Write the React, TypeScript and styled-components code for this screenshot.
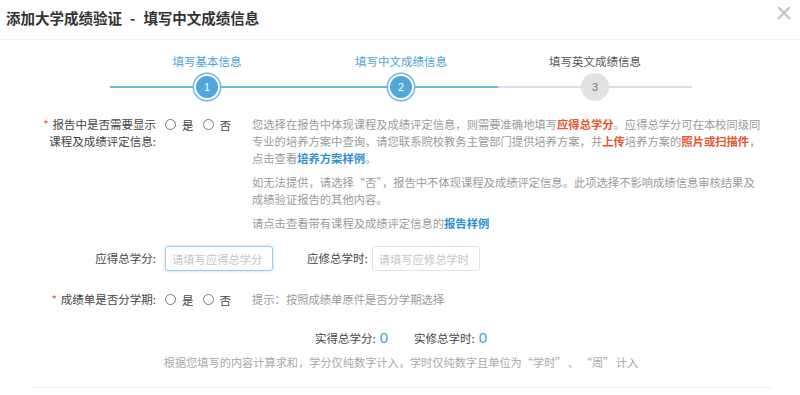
import styled, { createGlobalStyle } from 'styled-components'

const GlobalStyle = createGlobalStyle`
  html, body {
    margin: 0;
    padding: 0;
    background: #ffffff;
  }
  body {
    font-family: "Noto Sans CJK SC", "Noto Sans", sans-serif;
    color: #555;
  }
`

const Modal = styled.div`
  width: 800px;
  height: 395px;
  background: #fff;
  overflow: hidden;
`

const Header = styled.div`
  height: 40px;
  display: flex;
  align-items: center;
  justify-content: space-between;
  padding: 0 8px 0 6px;
  border-bottom: 1px solid #f1f1f1;
  box-sizing: border-box;
`

const Title = styled.h2`
  margin: -4px 0 0;
  font-size: 14.5px;
  font-weight: 700;
  color: #333;
`

const Dash = styled.span`
  margin: 0 8px;
`

const CloseButton = styled.button`
  border: 0;
  background: transparent;
  padding: 0;
  width: 16px;
  height: 16px;
  margin-top: -14px;
  cursor: pointer;
`

const Steps = styled.div`
  display: grid;
  grid-template-columns: repeat(3, 194px);
  padding-left: 110px;
  margin-top: 13px;
`

const Step = styled.div`
  display: flex;
  flex-direction: column;
  align-items: center;
`

const StepLabel = styled.div<{ $active: boolean }>`
  font-size: 11.5px;
  line-height: 16px;
  color: ${(p) => (p.$active ? '#4aa3d6' : '#555')};
`

const StepTrack = styled.div<{ $active: boolean }>`
  position: relative;
  width: 100%;
  height: 28px;
  margin-top: 4px;
  display: flex;
  align-items: center;
  justify-content: center;
  &::before {
    content: '';
    position: absolute;
    left: 0;
    right: 0;
    top: 13px;
    height: 2px;
    background: ${(p) => (p.$active ? '#6db7e1' : '#dcdcec')};
  }
`

const StepDot = styled.div<{ $active: boolean }>`
  position: relative;
  box-sizing: border-box;
  width: ${(p) => (p.$active ? '22px' : '28px')};
  height: ${(p) => (p.$active ? '22px' : '28px')};
  border-radius: 50%;
  background: ${(p) => (p.$active ? '#4ea8dc' : '#e2e2e2')};
  box-shadow: ${(p) => (p.$active ? '0 0 0 2px #fff, 0 0 0 3.5px #6db7e1' : 'none')};
  color: ${(p) => (p.$active ? '#fff' : '#777')};
  font-family: "Liberation Sans", Arial, sans-serif;
  font-size: 11px;
  display: flex;
  align-items: center;
  justify-content: center;
`

const Form = styled.div`
  margin-top: 15px;
`

const Row = styled.div<{ $align?: string; $gap?: number }>`
  display: flex;
  align-items: ${(p) => p.$align || 'flex-start'};
  margin-top: ${(p) => p.$gap ?? 0}px;
`

const Label = styled.div`
  width: 156px;
  flex-shrink: 0;
  text-align: right;
  font-size: 11.5px;
  line-height: 17px;
  color: #444;
`

const InlineLabel = styled.div`
  margin-left: 34px;
  font-size: 11.5px;
  line-height: 17px;
  color: #444;
`

const Required = styled.span`
  color: #e4572e;
  margin-right: 4px;
`

const RadioGroup = styled.div`
  width: 96px;
  flex-shrink: 0;
  display: flex;
  align-items: center;
  gap: 9px;
  padding-left: 9px;
  box-sizing: border-box;
  height: 17px;
`

const RadioOption = styled.label`
  display: flex;
  align-items: center;
  gap: 6px;
  font-size: 11.5px;
  color: #444;
`

const RadioCircle = styled.span`
  width: 9px;
  height: 9px;
  border: 1px solid #777;
  border-radius: 50%;
`

const Description = styled.div`
  width: 520px;
  font-size: 11.3px;
  line-height: 17px;
  color: #9a9a9a;
`

const Para = styled.p`
  margin: 0 0 7px;
  white-space: nowrap;
  &:last-child {
    margin-bottom: 0;
  }
`

const Warn = styled.b`
  color: #e4572e;
  font-weight: 700;
`

const LinkText = styled.b`
  color: #2b8fd3;
  font-weight: 700;
`

const Input = styled.input<{ $focused?: boolean }>`
  width: 108px;
  height: 25px;
  box-sizing: border-box;
  margin-left: ${(p) => (p.$focused ? 9 : 4)}px;
  padding: 0 6px;
  border: 1px solid ${(p) => (p.$focused ? '#9ccbea' : '#e2e2e2')};
  border-radius: 3px;
  box-shadow: ${(p) => (p.$focused ? '0 0 3px rgba(102, 175, 233, 0.5)' : 'none')};
  font-family: "Noto Sans CJK SC", sans-serif;
  font-size: 11.3px;
  outline: none;
  &::placeholder {
    color: #c4c4c4;
  }
`

const Hint = styled.div`
  font-size: 11.3px;
  line-height: 17px;
  color: #9a9a9a;
`

const Totals = styled.div`
  display: flex;
  justify-content: center;
  align-items: baseline;
  gap: 26px;
  margin-top: 20px;
  padding-left: 2px;
`

const TotalItem = styled.div`
  font-size: 11.5px;
  line-height: 20px;
  color: #444;
`

const TotalValue = styled.span`
  font-family: "Liberation Sans", Arial, sans-serif;
  font-size: 15px;
  color: #3aa9c9;
  margin-left: 4px;
`

const Note = styled.div`
  text-align: center;
  font-size: 11.2px;
  line-height: 17px;
  color: #a8a8a8;
  margin-top: 6px;
  padding-left: 2px;
  word-spacing: -1px;
`

const Divider = styled.div`
  margin: 16px 28px 0 32px;
  height: 1px;
  background: #f0f0f0;
`

const steps = [
  { label: '填写基本信息', active: true },
  { label: '填写中文成绩信息', active: true },
  { label: '填写英文成绩信息', active: false },
]

const Radios = () => (
  <RadioGroup>
    <RadioOption>
      <RadioCircle />是
    </RadioOption>
    <RadioOption>
      <RadioCircle />否
    </RadioOption>
  </RadioGroup>
)

export default function App() {
  return (
    <>
      <GlobalStyle />
      <Modal>
        <Header>
          <Title>
            添加大学成绩验证<Dash>-</Dash>填写中文成绩信息
          </Title>
          <CloseButton aria-label="关闭">
            <svg width="16" height="16" viewBox="0 0 16 16">
              <path d="M2 2 L14 14 M14 2 L2 14" stroke="#c2c2c2" strokeWidth="2" />
            </svg>
          </CloseButton>
        </Header>

        <Steps>
          {steps.map((step, i) => (
            <Step key={step.label}>
              <StepLabel $active={step.active}>{step.label}</StepLabel>
              <StepTrack $active={step.active}>
                <StepDot $active={step.active}>{i + 1}</StepDot>
              </StepTrack>
            </Step>
          ))}
        </Steps>

        <Form>
          <Row>
            <Label>
              <Required>*</Required>报告中是否需要显示
              <br />
              课程及成绩评定信息:
            </Label>
            <Radios />
            <Description>
              <Para>
                您选择在报告中体现课程及成绩评定信息，则需要准确地填写<Warn>应得总学分</Warn>。应得总学分可在本校同级同
                <br />
                专业的培养方案中查询，请您联系院校教务主管部门提供培养方案，并<Warn>上传</Warn>培养方案的
                <Warn>照片或扫描件</Warn>，
                <br />
                点击查看<LinkText>培养方案样例</LinkText>。
              </Para>
              <Para>
                如无法提供，请选择“否”，报告中不体现课程及成绩评定信息。此项选择不影响成绩信息审核结果及
                <br />
                成绩验证报告的其他内容。
              </Para>
              <Para>
                请点击查看带有课程及成绩评定信息的<LinkText>报告样例</LinkText>
              </Para>
            </Description>
          </Row>

          <Row $align="center" $gap={14}>
            <Label>应得总学分:</Label>
            <Input $focused placeholder="请填写应得总学分" />
            <InlineLabel>应修总学时:</InlineLabel>
            <Input placeholder="请填写应修总学时" />
          </Row>

          <Row $gap={20}>
            <Label>
              <Required>*</Required>成绩单是否分学期:
            </Label>
            <Radios />
            <Hint>提示：按照成绩单原件是否分学期选择</Hint>
          </Row>

          <Totals>
            <TotalItem>
              实得总学分:<TotalValue>0</TotalValue>
            </TotalItem>
            <TotalItem>
              实修总学时:<TotalValue>0</TotalValue>
            </TotalItem>
          </Totals>

          <Note>根据您填写的内容计算求和，学分仅纯数字计入，学时仅纯数字且单位为“学时” 、 “周” 计入</Note>

          <Divider />
        </Form>
      </Modal>
    </>
  )
}
